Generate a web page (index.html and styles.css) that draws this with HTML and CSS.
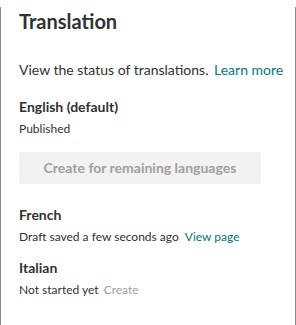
FILE: index.html
```html
<!DOCTYPE html>
<html>
<head>
<meta charset="utf-8">
<title>Translation</title>
<link rel="stylesheet" href="styles.css">
</head>
<body>
  <div class="panel">
    <h1 class="title">Translation</h1>
    <p class="desc">View the status of translations. <a class="link" href="#">Learn more</a></p>

    <div class="lang">
      <div class="lang-name">English (default)</div>
      <div class="lang-status">Published</div>
    </div>

    <div class="btn">Create for remaining languages</div>

    <div class="lang lang-french">
      <div class="lang-name">French</div>
      <div class="lang-status">Draft saved a few seconds ago <a class="link" href="#">View page</a></div>
    </div>

    <div class="lang lang-italian">
      <div class="lang-name">Italian</div>
      <div class="lang-status">Not started yet <span class="muted">Create</span></div>
    </div>
  </div>
</body>
</html>
```

FILE: styles.css
```css
* {
  padding: 0;
  margin: 0;
  box-sizing: border-box;
}

body {
  font-family: "Segoe UI", Lato, sans-serif;
  color: #323130;
  background: #fff;
}

.panel {
  width: 296px;
  height: 325px;
  padding: 0 8px 0 18px;
  border: 1px solid #8a8886;
  border-top: none;
}

.title {
  margin-top: 7px;
  font-size: 20px;
  line-height: 28px;
  font-weight: 700;
}

.desc {
  margin-top: 25px;
  font-size: 14px;
  line-height: 20px;
  white-space: nowrap;
}

.link {
  color: #03787c;
  text-decoration: none;
  margin-left: 2px;
}

.lang {
  margin-top: 17px;
}

.lang-name {
  font-size: 14px;
  line-height: 20px;
  font-weight: 700;
}

.lang-status {
  margin-top: 4px;
  font-size: 12px;
  line-height: 16px;
}

.lang-status .link {
  margin-left: 3px;
}

.muted {
  color: #a19f9d;
  margin-left: 2px;
}

.btn {
  width: 242px;
  height: 32px;
  margin-top: 15px;
  background: #f3f2f1;
  color: #a19f9d;
  border-radius: 2px;
  font-size: 14px;
  line-height: 32px;
  font-weight: 700;
  text-align: center;
}

.lang-french {
  margin-top: 21px;
}

.lang-italian {
  margin-top: 13px;
}
```
